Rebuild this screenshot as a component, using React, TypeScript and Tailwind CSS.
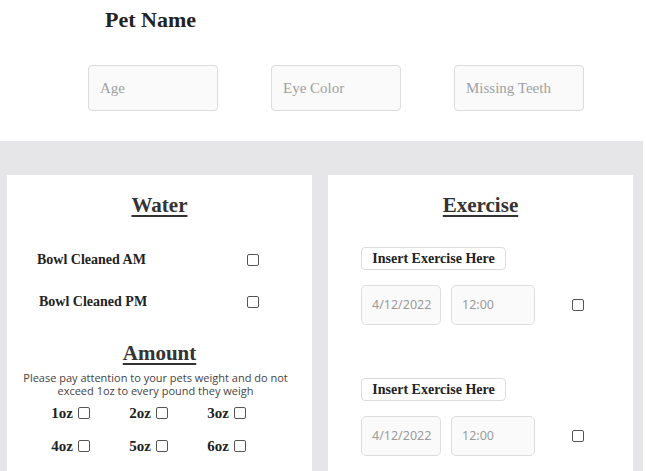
const serif = "font-['Liberation_Serif',serif]";

function Box() {
  return <span className="inline-block h-[12px] w-[12px] shrink-0 rounded-[2px] border border-[#555] bg-white" />;
}

function TopField({ label }: { label: string }) {
  return (
    <div className="flex h-[46px] w-[130px] items-center rounded-[4px] border border-[#dcdcdc] bg-[#fafafa] pl-[11px]">
      <span className={`${serif} text-[15px] text-[#a0a0a0]`}>{label}</span>
    </div>
  );
}

function ExerciseBlock() {
  return (
    <div>
      <div className={`${serif} flex h-[23px] w-[145px] items-center justify-center rounded-[4px] border border-[#dcdcdc] text-[14px] font-bold text-[#222]`}>
        Insert Exercise Here
      </div>
      <div className="mt-[15px] flex items-center">
        <div className="flex h-[40px] w-[80px] items-center rounded-[5px] border border-[#dedede] bg-[#fafafa] pl-[10px] font-['Noto_Sans',sans-serif] text-[12.5px] text-[#9a9a9a]">
          4/12/2022
        </div>
        <div className="ml-[10px] flex h-[40px] w-[84px] items-center rounded-[5px] border border-[#dedede] bg-[#fafafa] pl-[10px] font-['Noto_Sans',sans-serif] text-[12.5px] text-[#9a9a9a]">
          12:00
        </div>
        <div className="ml-[37px]">
          <Box />
        </div>
      </div>
    </div>
  );
}

export default function App() {
  const oz = [
    ["1oz", "2oz", "3oz"],
    ["4oz", "5oz", "6oz"],
  ];
  return (
    <div className="h-[471px] w-[646px] overflow-hidden bg-white">
      {/* header */}
      <div className="h-[141px]">
        <h1 className={`${serif} pl-[105px] pt-[6px] text-[22px] font-bold leading-[28px] text-[#222]`}>Pet Name</h1>
        <div className="mt-[31px] flex gap-[53px] pl-[88px]">
          <TopField label="Age" />
          <TopField label="Eye Color" />
          <TopField label="Missing Teeth" />
        </div>
      </div>

      {/* gray area */}
      <div className="flex h-[330px] w-[643px] gap-[16px] bg-[#e6e5e8] pl-[7px] pt-[34px]">
        {/* water */}
        <div className="h-[400px] w-[305px] bg-white pt-[16px]">
          <h2 className={`${serif} text-center text-[21px] font-bold leading-[28px] text-[#333] underline decoration-[1.5px] underline-offset-[3px]`}>
            Water
          </h2>
          <div className={`${serif} mt-[30px] flex items-center pl-[30px] text-[14px] font-bold text-[#222]`}>
            <span className="w-[210px]">Bowl Cleaned AM</span>
            <Box />
          </div>
          <div className={`${serif} mt-[21px] flex items-center pl-[32px] text-[14px] font-bold text-[#222]`}>
            <span className="w-[208px]">Bowl Cleaned PM</span>
            <Box />
          </div>
          <h2 className={`${serif} mt-[27px] text-center text-[21px] font-bold leading-[28px] text-[#333] underline decoration-[1.5px] underline-offset-[3px]`}>
            Amount
          </h2>
          <p className="mt-[4px] pr-[8px] text-center font-['Open_Sans',sans-serif] text-[11px] leading-[13px] text-[#444]">
            Please pay attention to your pets weight and do not
            <br />
            exceed 1oz to every pound they weigh
          </p>
          <div className="mt-[6px] flex flex-col gap-[13px]">
            {oz.map((row, r) => (
              <div key={r} className="flex pl-[36px]">
                {row.map((o) => (
                  <div key={o} className="flex w-[78px] items-center gap-[5px]">
                    <span className={`${serif} w-[30px] text-right text-[15px] font-bold leading-[20px] text-[#222]`}>{o}</span>
                    <Box />
                  </div>
                ))}
              </div>
            ))}
          </div>
        </div>

        {/* exercise */}
        <div className="h-[400px] w-[305px] bg-white pt-[16px]">
          <h2 className={`${serif} text-center text-[21px] font-bold leading-[28px] text-[#333] underline decoration-[1.5px] underline-offset-[3px]`}>
            Exercise
          </h2>
          <div className="mt-[28px] pl-[33px]">
            <ExerciseBlock />
          </div>
          <div className="mt-[53px] pl-[33px]">
            <ExerciseBlock />
          </div>
        </div>
      </div>
    </div>
  );
}
